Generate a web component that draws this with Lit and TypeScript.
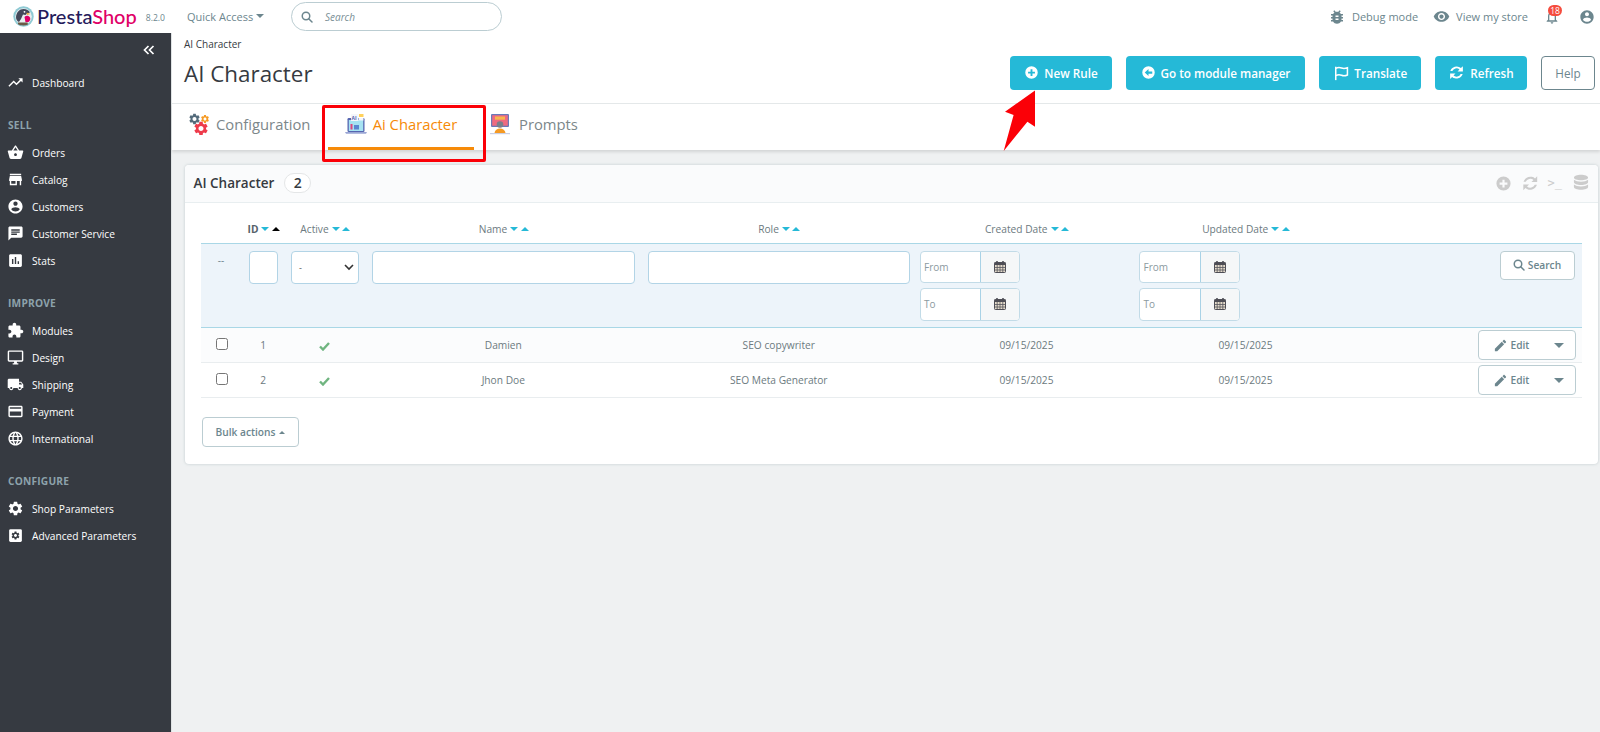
import { LitElement, html, css } from "lit";
import { customElement } from "lit/decorators.js";

const M: Record<string, string> = {
  trend: "M16 6l2.29 2.29-4.88 4.88-4-4L2 16.59 3.41 18l6-6 4 4 6.3-6.29L22 12V6z",
  basket: "M17.21 9l-4.38-6.56c-.19-.28-.51-.42-.83-.42-.32 0-.64.14-.83.43L6.79 9H2c-.55 0-1 .45-1 1 0 .09.01.18.04.27l2.54 9.27c.23.84 1 1.46 1.92 1.46h13c.92 0 1.69-.62 1.93-1.46l2.54-9.27L23 10c0-.55-.45-1-1-1h-4.79zM9 9l3-4.4L15 9H9zm3 8c-1.1 0-2-.9-2-2s.9-2 2-2 2 .9 2 2-.9 2-2 2z",
  store: "M20 4H4v2h16V4zm1 10v-2l-1-5H4l-1 5v2h1v6h10v-6h4v6h2v-6h1zm-9 4H6v-4h6v4z",
  account: "M12 2C6.48 2 2 6.48 2 12s4.48 10 10 10 10-4.48 10-10S17.52 2 12 2zm0 3c1.66 0 3 1.34 3 3s-1.34 3-3 3-3-1.34-3-3 1.34-3 3-3zm0 14.2c-2.5 0-4.71-1.28-6-3.22.03-1.99 4-3.08 6-3.08 1.99 0 5.97 1.09 6 3.08-1.29 1.94-3.5 3.22-6 3.22z",
  chat: "M20 2H4c-1.1 0-1.99.9-1.99 2L2 22l4-4h14c1.1 0 2-.9 2-2V4c0-1.1-.9-2-2-2zM6 9h12v2H6V9zm8 5H6v-2h8v2zm4-6H6V6h12v2z",
  stats: "M19 3H5c-1.1 0-2 .9-2 2v14c0 1.1.9 2 2 2h14c1.1 0 2-.9 2-2V5c0-1.1-.9-2-2-2zM9 17H7v-7h2v7zm4 0h-2V7h2v10zm4 0h-2v-4h2v4z",
  ext: "M20.5 11H19V7c0-1.1-.9-2-2-2h-4V3.5C13 2.12 11.88 1 10.5 1S8 2.12 8 3.5V5H4c-1.1 0-1.99.9-1.99 2v3.8H3.5c1.49 0 2.7 1.21 2.7 2.7s-1.21 2.7-2.7 2.7H2V20c0 1.1.9 2 2 2h3.8v-1.5c0-1.49 1.21-2.7 2.7-2.7 1.49 0 2.7 1.21 2.7 2.7V22H17c1.1 0 2-.9 2-2v-4h1.5c1.38 0 2.5-1.12 2.5-2.5S21.88 11 20.5 11z",
  desktop: "M21 2H3c-1.1 0-2 .9-2 2v12c0 1.1.9 2 2 2h7v2H8v2h8v-2h-2v-2h7c1.1 0 2-.9 2-2V4c0-1.1-.9-2-2-2zm0 14H3V4h18v12z",
  truck: "M20 8h-3V4H3c-1.1 0-2 .9-2 2v11h2c0 1.66 1.34 3 3 3s3-1.34 3-3h6c0 1.66 1.34 3 3 3s3-1.34 3-3h2v-5l-3-4zM6 18.5c-.83 0-1.5-.67-1.5-1.5s.67-1.5 1.5-1.5 1.5.67 1.5 1.5-.67 1.5-1.5 1.5zm13.5-9l1.96 2.5H17V9.5h2.5zm-1.5 9c-.83 0-1.5-.67-1.5-1.5s.67-1.5 1.5-1.5 1.5.67 1.5 1.5-.67 1.5-1.5 1.5z",
  card: "M20 4H4c-1.11 0-1.99.89-1.99 2L2 18c0 1.11.89 2 2 2h16c1.11 0 2-.89 2-2V6c0-1.11-.89-2-2-2zm0 14H4v-6h16v6zm0-10H4V6h16v2z",
  globe: "M11.99 2C6.47 2 2 6.48 2 12s4.47 10 9.99 10C17.52 22 22 17.52 22 12S17.52 2 11.99 2zm6.93 6h-2.95c-.32-1.25-.78-2.45-1.38-3.56 1.84.63 3.37 1.91 4.33 3.56zM12 4.04c.83 1.2 1.48 2.53 1.91 3.96h-3.82c.43-1.43 1.08-2.76 1.91-3.96zM4.26 14C4.1 13.36 4 12.69 4 12s.1-1.36.26-2h3.38c-.08.66-.14 1.32-.14 2 0 .68.06 1.34.14 2H4.26zm.82 2h2.95c.32 1.25.78 2.45 1.38 3.56-1.84-.63-3.37-1.9-4.33-3.56zm2.95-8H5.08c.96-1.66 2.49-2.93 4.33-3.56C8.81 5.55 8.35 6.75 8.03 8zM12 19.96c-.83-1.2-1.48-2.53-1.91-3.96h3.82c-.43 1.43-1.08 2.76-1.91 3.96zM14.34 14H9.66c-.09-.66-.16-1.32-.16-2 0-.68.07-1.35.16-2h4.68c.09.65.16 1.32.16 2 0 .68-.07 1.34-.16 2zm.25 5.56c.6-1.11 1.06-2.31 1.38-3.56h2.95c-.96 1.65-2.49 2.93-4.33 3.56zM16.36 14c.08-.66.14-1.32.14-2 0-.68-.06-1.34-.14-2h3.38c.16.64.26 1.31.26 2s-.1 1.36-.26 2h-3.38z",
  gear: "M19.14 12.94c.04-.3.06-.61.06-.94 0-.32-.02-.64-.07-.94l2.03-1.58c.18-.14.23-.41.12-.61l-1.92-3.32c-.12-.22-.37-.29-.59-.22l-2.39.96c-.5-.38-1.03-.7-1.62-.94l-.36-2.54c-.04-.24-.24-.41-.48-.41h-3.84c-.24 0-.43.17-.47.41l-.36 2.54c-.59.24-1.13.57-1.62.94l-2.39-.96c-.22-.08-.47 0-.59.22L2.74 8.87c-.12.21-.08.47.12.61l2.03 1.58c-.05.3-.09.63-.09.94s.02.64.07.94l-2.03 1.58c-.18.14-.23.41-.12.61l1.92 3.32c.12.22.37.29.59.22l2.39-.96c.5.38 1.03.7 1.62.94l.36 2.54c.05.24.24.41.48.41h3.84c.24 0 .44-.17.47-.41l.36-2.54c.59-.24 1.13-.56 1.62-.94l2.39.96c.22.08.47 0 .59-.22l1.92-3.32c.12-.22.07-.47-.12-.61l-2.01-1.58zM12 15.6c-1.98 0-3.6-1.62-3.6-3.6s1.62-3.6 3.6-3.6 3.6 1.62 3.6 3.6-1.62 3.6-3.6 3.6z",
  bug: "M20 8h-2.81c-.45-.78-1.07-1.45-1.82-1.96L17 4.41 15.59 3l-2.17 2.17C12.96 5.06 12.49 5 12 5c-.49 0-.96.06-1.41.17L8.41 3 7 4.41l1.62 1.63C7.88 6.55 7.26 7.22 6.81 8H4v2h2.09c-.05.33-.09.66-.09 1v1H4v2h2v1c0 .34.04.67.09 1H4v2h2.81c1.04 1.79 2.97 3 5.19 3s4.15-1.21 5.19-3H20v-2h-2.09c.05-.33.09-.66.09-1v-1h2v-2h-2v-1c0-.34-.04-.67-.09-1H20V8zm-6 8h-4v-2h4v2zm0-4h-4v-2h4v2z",
  eye: "M12 4.5C7 4.5 2.73 7.61 1 12c1.73 4.39 6 7.5 11 7.5s9.27-3.11 11-7.5c-1.73-4.39-6-7.5-11-7.5zM12 17c-2.76 0-5-2.24-5-5s2.24-5 5-5 5 2.24 5 5-2.24 5-5 5zm0-8c-1.66 0-3 1.34-3 3s1.34 3 3 3 3-1.34 3-3-1.34-3-3-3z",
  bell: "M12 22c1.1 0 2-.9 2-2h-4c0 1.1.9 2 2 2zm6-6v-5c0-3.07-1.63-5.64-4.5-6.32V4c0-.83-.67-1.5-1.5-1.5s-1.5.67-1.5 1.5v.68C7.64 5.36 6 7.92 6 11v5l-2 2v1h16v-1l-2-2zm-2 1H8v-6c0-2.48 1.51-4.5 4-4.5s4 2.02 4 4.5v6z",
  pencil: "M3 17.25V21h3.75L17.81 9.94l-3.75-3.75L3 17.25zM20.71 7.04c.39-.39.39-1.02 0-1.41l-2.34-2.34c-.39-.39-1.02-.39-1.41 0l-1.83 1.83 3.75 3.75 1.83-1.83z",
  plusC: "M12 2a10 10 0 1 0 0 20 10 10 0 0 0 0-20zm5.5 11.6h-4v4h-3v-4h-4v-3h4v-4h3v4h4z",
  leftC: "M12 2a10 10 0 1 0 0 20 10 10 0 0 0 0-20zm6 11.8h-6v3.7l-6-5.5 6-5.5v3.7h6z",
  refresh: "M21 3v7.5h-7.5l2.7-2.7A6.4 6.4 0 0 0 6.1 10H3.3a9.2 9.2 0 0 1 14.9-4.2zM3 21v-7.5h7.5l-2.7 2.7a6.4 6.4 0 0 0 10.1-2.2h2.8a9.2 9.2 0 0 1-14.9 4.2z",
  db: "M12 2c4.6 0 8.5 1.4 8.5 3.4S16.6 8.8 12 8.8 3.5 7.4 3.5 5.4 7.4 2 12 2zM3.5 8.2C5.3 9.7 8.5 10.4 12 10.4s6.7-.7 8.5-2.2v3c0 1.9-3.9 3.3-8.5 3.3s-8.5-1.4-8.5-3.3zm0 5.6c1.8 1.5 5 2.3 8.5 2.3s6.7-.8 8.5-2.3v2.9c0 2-3.9 3.3-8.5 3.3s-8.5-1.3-8.5-3.3z",
};

const icon = (name: string, size: number) => html`<svg width=${size} height=${size} viewBox="0 0 24 24" fill="currentColor"><path d=${M[name]}></path></svg>`;

const advanced = (size: number) => html`<svg width=${size} height=${size} viewBox="0 0 24 24"><rect x="3" y="3" width="18" height="18" rx="2" fill="currentColor"></rect><g transform="translate(5 5) scale(.583)"><path d=${M.gear} fill="#363a41"></path></g></svg>`;

const searchIcon = (size: number) => html`<svg width=${size} height=${size} viewBox="0 0 24 24" fill="none" stroke="currentColor" stroke-width="3"><circle cx="10" cy="10" r="7.5"></circle><path d="M15.5 15.5 22 22" stroke-linecap="round"></path></svg>`;

const flagIcon = (size: number) => html`<svg width=${size} height=${size} viewBox="0 0 24 24" fill="none" stroke="currentColor" stroke-width="2.2"><path d="M4 2.5V22"></path><path d="M4 5c3-1.8 6-1.6 8.5-.6s5 .9 8.5-.4v10.5c-3.5 1.6-6 1.6-8.5.5s-5.5-1.2-8.5.5"></path></svg>`;

const calendar = () => html`<svg width="12" height="12" viewBox="0 0 12 12"><rect x=".5" y="1.5" width="11" height="10" rx=".8" fill="#e5dccb" stroke="#4e4e56"></rect><rect x=".5" y="1.5" width="11" height="2.5" fill="#4e4e56"></rect><path d="M3 0v3M9 0v3" stroke="#4e4e56" stroke-width="1.6"></path><path d="M.5 6.5h11M.5 9h11M3.2 4v7M6 4v7M8.8 4v7" stroke="#55555d" stroke-width=".8"></path></svg>`;

const logo = () => html`<svg width="21" height="21" viewBox="0 0 21 21"><circle cx="10.5" cy="10.5" r="10.2" fill="#8fcad4"></circle><circle cx="10.5" cy="10.5" r="8.3" fill="#e9eef0"></circle><path d="M3 11c.5-5 3.5-8 7.5-8 3 0 5.5 1.3 6.5 3.5l-3 1-1.5 1.5-2.5-.5L8 13l-2 3c-2-1-3-2.5-3-5z" fill="#44485a"></path><circle cx="11.5" cy="5.8" r=".9" fill="#fff"></circle><path d="M13.5 6.5 17.5 8l-3.5 1z" fill="#f2a93c"></path><path d="M11.5 11c1.5-1.8 4.5-1.5 5.5.5.8 1.5 0 3.5-1.5 4.5l-3 .2z" fill="#df0067"></path><path d="M5 16.5h9.5l.5 2c-3 1.5-7.5 1.2-10-.2z" fill="#6b5a45"></path></svg>`;

const gears = () => html`<svg width="22" height="22" viewBox="0 0 22 22"><g transform="translate(.9 -.6) scale(.55)"><path d=${M.gear} fill="#546b7b"></path></g><g transform="translate(13 1) scale(.415)"><path d=${M.gear} fill="#f59a23"></path></g><g transform="translate(5.6 7.1) scale(.7)"><path d=${M.gear} fill="#ee3b4b"></path></g></svg>`;

const aiIcon = () => html`<svg width="22" height="22" viewBox="0 0 22 22"><rect x="2.5" y="5" width="17" height="14" rx="1.2" fill="#5565b0"></rect><rect x="3.8" y="7" width="14.4" height="11" fill="#a6e3f2"></rect><rect x="6" y="1" width="7.5" height="7" rx=".5" fill="#f4f6fb"></rect><text x="6.5" y="6.5" font-size="5" font-family="Open Sans" font-weight="700" fill="#5565b0">AI</text><rect x="14" y="1" width="4.5" height="3" fill="#ffd15c"></rect><rect x="14" y="5" width="4.5" height="2.5" fill="#f4f6fb"></rect><rect x="5.5" y="11" width="2" height="5.5" fill="#e0457b"></rect><rect x="9" y="12" width="5" height="4.5" fill="#5a86d0"></rect><path d="M0 19h22l-1 1.8H1z" fill="#9aa6d4"></path></svg>`;

const promptIcon = () => html`<svg width="22" height="22" viewBox="0 0 22 22"><rect x="2" y="1" width="18" height="13" rx="1" fill="#6a78b8"></rect><rect x="3.2" y="2.2" width="15.6" height="10.5" fill="#ef6a80"></rect><rect x="6" y="3.5" width="10" height="3.2" fill="#f7b64d"></rect><circle cx="11" cy="11.5" r="3.3" fill="#7a7f8c"></circle><path d="M5.5 20c.5-3 2.5-4.5 5.5-4.5s5 1.5 5.5 4.5z" fill="#f59a23"></path><path d="M1 20h20v1.2H1z" fill="#c9cfe3"></path></svg>`;

const sortIcons = (asc = false) => html`<span class="sort"><i class="dn"></i><i class=${asc ? "up black" : "up"}></i></span>`;

type NavItem = [string, string];
const NAV: { title?: string; items: NavItem[] }[] = [
  { items: [["Dashboard", "trend"]] },
  { title: "SELL", items: [["Orders", "basket"], ["Catalog", "store"], ["Customers", "account"], ["Customer Service", "chat"], ["Stats", "stats"]] },
  { title: "IMPROVE", items: [["Modules", "ext"], ["Design", "desktop"], ["Shipping", "truck"], ["Payment", "card"], ["International", "globe"]] },
  { title: "CONFIGURE", items: [["Shop Parameters", "gear"], ["Advanced Parameters", "advanced"]] },
];

const ROWS = [
  { id: 1, name: "Damien", role: "SEO copywriter", alt: true },
  { id: 2, name: "Jhon Doe", role: "SEO Meta Generator", alt: false },
];

@customElement("app-root")
export class AppRoot extends LitElement {
  static styles = css`
    :host { display: block; height: 732px; overflow: hidden; position: relative; font-family: "Open Sans", "Liberation Sans", sans-serif; color: #363a41; background: #eff1f2; }
    * { box-sizing: border-box; }
    svg { display: block; flex: none; }

    .top { height: 33px; background: #fff; display: flex; align-items: center; padding: 0 5px 0 13px; }
    .brand { display: flex; align-items: center; width: 174px; }
    .brand b { font: 500 20px/33px "Lato", sans-serif; margin-left: 3px; color: #251b5b; }
    .brand b span { color: #df0067; }
    .brand small { font-size: 8.6px; color: #6c868e; margin-left: 9px; margin-top: 3px; }
    .quick { font-size: 11px; color: #6c868e; display: flex; align-items: center; gap: 3px; width: 104px; margin-top: -1px; }
    .caret { width: 0; height: 0; border-left: 4px solid transparent; border-right: 4px solid transparent; border-top: 4px solid currentColor; }
    .search { width: 211px; height: 29px; border: 1px solid #bbcdd2; border-radius: 15px; display: flex; align-items: center; padding-left: 9px; color: #6c868e; gap: 12px; }
    .search em { font-size: 10px; color: #7a8f96; }
    .right { margin-left: auto; display: flex; align-items: center; color: #6c868e; font-size: 11px; }
    .right .it { display: flex; align-items: center; gap: 6px; }
    .right .view { margin-left: 15px; }
    .bell { position: relative; margin-left: 16px; }
    .bell b { position: absolute; top: -4px; left: 4px; width: 14px; height: 11px; line-height: 11px; border-radius: 6px; background: #f54c3e; color: #fff; font-size: 8.5px; font-weight: 400; text-align: center; }
    .acc { margin-left: 19px; }

    .body { display: flex; height: 699px; }
    nav { width: 171px; flex: none; background: #363a41; color: #fff; font-size: 10.2px; }
    .collapse { height: 34px; display: flex; justify-content: flex-end; padding: 12px 16px 0 0; }
    .g0 { margin-bottom: 1px; }
    .navtitle { height: 16px; margin-top: 21px; margin-bottom: 6px; line-height: 16px; font-size: 10.2px; font-weight: 700; color: #8da2ab; padding-left: 8px; letter-spacing: .2px; }
    .navitem { height: 27px; display: flex; align-items: center; padding-left: 7px; gap: 8px; }
    .navitem span { white-space: nowrap; }
    .first { margin-top: 2px; }

    main { flex: 1; min-width: 0; border-left: 1px solid #dfe3e4; }
    .head { height: 71px; background: #fff; border-bottom: 1px solid #e5e9ea; padding: 4px 0 0 12px; display: flex; }
    .crumb { font-size: 10px; color: #363a41; line-height: 13px; margin-top: 1px; }
    h1 { font-size: 22.4px; font-weight: 400; margin: 6px 0 0; line-height: 34px; }
    .actions { margin-left: auto; padding: 19px 5px 0 0; display: flex; gap: 14px; }
    .act { height: 33.5px; display: flex; align-items: center; justify-content: center; gap: 5px; background: #25b9d7; color: #fff; border-radius: 4px; font-size: 11.7px; font-weight: 600; }
    .act.help { background: #fff; color: #6c868e; border: 1px solid #6c868e; font-weight: 400; }

    .tabs { height: 46px; background: #fff; display: flex; box-shadow: 0 2px 3px rgba(0,0,0,.12); padding-left: 15px; }
    .tab { height: 46px; display: flex; align-items: center; font-size: 14.8px; color: #7c878a; gap: 7px; padding-bottom: 7px; }
    .tab.c { width: 129.7px; }
    .tab.active { color: #f68a08; width: 146px; padding-left: 17px; margin-left: 11px; border-bottom: 3px solid #f68a08; padding-bottom: 4px; gap: 6px; }
    .tab.p { margin-left: 15.3px; gap: 8px; }

    .panel { margin: 15px 2px 0 13px; height: 299px; background: #fff; border-radius: 4px; box-shadow: 0 0 3px rgba(170,185,190,.7); }
    .phead { height: 38px; background: #fafbfc; border-bottom: 1px solid #e8eef0; display: flex; align-items: center; padding: 0 7.5px 1px 8.5px; border-radius: 4px 4px 0 0; }
    .phead strong { font-size: 13.5px; font-weight: 600; color: #363a41; }
    .badge { margin-left: 10px; height: 20px; width: 27px; border: 1px solid #e4e6e7; border-radius: 10px; text-align: center; font-size: 14px; line-height: 18px; font-weight: 600; background: #fff; }
    .tools { margin-left: auto; display: flex; align-items: center; color: #ccc; gap: 8.5px; }
    .term { font: 400 12px/14px "DejaVu Sans Mono", monospace; color: #ccc; width: 14.5px; }

    .tbl { margin: 0 16px 0 16px; font-size: 10.2px; color: #6c7a80; }
    .row { display: grid; grid-template-columns: 41px 42.5px 80.5px 276.5px 274.5px 221px 217px 1fr; }
    .hrow { height: 40px; align-items: center; padding-top: 11px; line-height: 14px; }
    .hrow > div { display: flex; justify-content: center; align-items: center; gap: 3px; padding-left: 1px; }
    .hrow .bold { font-weight: 700; color: #55626a; }
    .sort { display: inline-flex; gap: 2.5px; align-items: center; }
    .sort i { width: 0; height: 0; border-left: 4px solid transparent; border-right: 4px solid transparent; display: block; }
    .sort .dn { border-top: 4px solid #25b9d7; }
    .sort .up { border-bottom: 4px solid #25b9d7; }
    .sort .up.black { border-bottom-color: #000; }
    .frow { height: 85px; background: #edf4fa; border-top: 1px solid #a9d7e6; border-bottom: 1px solid #a9d7e6; padding-top: 6.5px; }
    .frow .dash { text-align: center; line-height: 18px; font-size: 10px; color: #6c868e; margin-left: -1px; }
    .inp { height: 33px; margin: 0 6.5px; background: #fff; border: 1px solid #b2d4e6; border-radius: 4px; display: flex; align-items: center; }
    .inp.sel { justify-content: space-between; padding: 0 4px 0 7px; font-size: 9px; color: #555; }
    .dates { display: flex; flex-direction: column; gap: 5px; }
    .dates.d1 { margin-left: 3.5px; }
    .dates.d2 { margin-left: 2px; }
    .date { width: 100.5px; height: 32.5px; display: flex; border: 1px solid #c2dbe7; border-radius: 4px; overflow: hidden; background: #fff; }
    .date span { width: 60.5px; border-right: 1px solid #a9d2e6; padding-left: 3.5px; line-height: 30px; font-size: 10px; color: #8b9aa0; }
    .date u { flex: 1; background: #f5f7f8; display: flex; align-items: center; justify-content: center; }
    .fact { display: flex; justify-content: flex-end; padding-right: 7.5px; }
    .btn { background: #fff; border: 1px solid #bbcdd2; border-radius: 4px; color: #6c868e; font-size: 10.2px; font-weight: 600; display: flex; align-items: center; }
    .sbtn { width: 75px; height: 29px; justify-content: center; gap: 3px; }
    .drow { height: 35px; align-items: center; border-bottom: 1px solid #e9edef; text-align: center; color: #6c7a80; font-size: 10.2px; }
    .drow.alt { background: #fbfcfd; }
    .cb { width: 12px; height: 12px; border: 1px solid #767676; border-radius: 2.5px; background: #fff; justify-self: center; margin-top: -3px; }
    .chk { display: flex; justify-content: center; margin-top: 2px; }
    .dact { display: flex; justify-content: flex-end; padding-right: 6px; }
    .ebtn { width: 98.5px; height: 29.5px; padding-left: 14px; gap: 3px; }
    .ebtn .caret { margin-left: auto; margin-right: 11px; border-left-width: 5px; border-right-width: 5px; border-top-width: 5px; }
    .bulk { width: 97px; height: 30px; margin-top: 19px; margin-left: .5px; justify-content: center; gap: 3px; }
    .cup { width: 0; height: 0; border-left: 3.5px solid transparent; border-right: 3.5px solid transparent; border-bottom: 3.5px solid currentColor; }

    .redbox { position: absolute; left: 321.5px; top: 105px; width: 164px; height: 57px; border: 3px solid #fb0007; border-radius: 2px; pointer-events: none; }
    .arrow { position: absolute; left: 1000px; top: 88px; pointer-events: none; }
  `;

  render() {
    return html`
      <div class="top">
        <div class="brand">${logo()}<b>Presta<span>Shop</span></b><small>8.2.0</small></div>
        <div class="quick">Quick Access <i class="caret"></i></div>
        <div class="search">${searchIcon(12)}<em>Search</em></div>
        <div class="right">
          <div class="it">${icon("bug", 18)}<span>Debug mode</span></div>
          <div class="it view">${icon("eye", 17)}<span>View my store</span></div>
          <div class="bell">${icon("bell", 16)}<b>18</b></div>
          <div class="acc">${icon("account", 16)}</div>
        </div>
      </div>
      <div class="body">
        <nav>
          <div class="collapse"><svg width="12" height="10" viewBox="0 0 12 10" fill="none" stroke="#fff" stroke-width="1.7"><path d="M5.5 1 1.5 5l4 4M10.5 1l-4 4 4 4"></path></svg></div>
          ${NAV.map((g, i) => html`<div class="navgroup g${i}">
            ${g.title ? html`<div class="navtitle">${g.title}</div>` : ""}
            ${g.items.map(([t, ic]) => html`<div class="navitem ${i === 0 ? "first" : ""}">${ic === "advanced" ? advanced(17) : icon(ic, 17)}<span>${t}</span></div>`)}
          </div>`)}
        </nav>
        <main>
          <div class="head">
            <div>
              <div class="crumb">AI Character</div>
              <h1>AI Character</h1>
            </div>
            <div class="actions">
              <div class="act" style="width:102px">${icon("plusC", 15)}New Rule</div>
              <div class="act" style="width:179px">${icon("leftC", 15)}Go to module manager</div>
              <div class="act" style="width:102px">${flagIcon(16.5)}Translate</div>
              <div class="act" style="width:92px">${icon("refresh", 17)}Refresh</div>
              <div class="act help" style="width:54px">Help</div>
            </div>
          </div>
          <div class="tabs">
            <div class="tab c">${gears()}Configuration</div>
            <div class="tab active">${aiIcon()}Ai Character</div>
            <div class="tab p">${promptIcon()}Prompts</div>
          </div>
          <div class="panel">
            <div class="phead">
              <strong>AI Character</strong><span class="badge">2</span>
              <div class="tools">${icon("plusC", 17)}${icon("refresh", 18.5)}<span class="term">&gt;_</span>${icon("db", 20)}</div>
            </div>
            <div class="tbl">
              <div class="row hrow">
                <div></div>
                <div class="bold">ID ${sortIcons(true)}</div>
                <div>Active ${sortIcons()}</div>
                <div>Name ${sortIcons()}</div>
                <div>Role ${sortIcons()}</div>
                <div>Created Date ${sortIcons()}</div>
                <div>Updated Date ${sortIcons()}</div>
                <div></div>
              </div>
              <div class="row frow">
                <div class="dash">--</div>
                <div class="inp"></div>
                <div class="inp sel"><span>-</span><svg width="10" height="7" viewBox="0 0 10 7" fill="none" stroke="#333" stroke-width="1.6"><path d="M1 1l4 4 4-4"></path></svg></div>
                <div class="inp"></div>
                <div class="inp"></div>
                <div class="dates d1">
                  <div class="date"><span>From</span><u>${calendar()}</u></div>
                  <div class="date"><span>To</span><u>${calendar()}</u></div>
                </div>
                <div class="dates d2">
                  <div class="date"><span>From</span><u>${calendar()}</u></div>
                  <div class="date"><span>To</span><u>${calendar()}</u></div>
                </div>
                <div class="fact"><div class="btn sbtn">${searchIcon(12)}Search</div></div>
              </div>
              ${ROWS.map((r) => html`<div class="row drow ${r.alt ? "alt" : ""}">
                <div class="cb"></div>
                <div>${r.id}</div>
                <div class="chk"><svg width="11" height="9" viewBox="0 0 11 9" fill="none" stroke="#70b580" stroke-width="2.4"><path d="M1 4.5 4 7.5 10 1"></path></svg></div>
                <div>${r.name}</div>
                <div>${r.role}</div>
                <div>09/15/2025</div>
                <div>09/15/2025</div>
                <div class="dact"><div class="btn ebtn">${icon("pencil", 15)}Edit<i class="caret"></i></div></div>
              </div>`)}
              <div class="btn bulk">Bulk actions <i class="cup"></i></div>
            </div>
          </div>
        </main>
      </div>
      <div class="redbox"></div>
      <svg class="arrow" width="38" height="65" viewBox="1000 88 38 65"><polygon points="1035,90.5 1005,111.7 1013.6,115 1003.7,151 1027.4,121.7 1035,126.7" fill="#fb0007"></polygon></svg>
    `;
  }
}
